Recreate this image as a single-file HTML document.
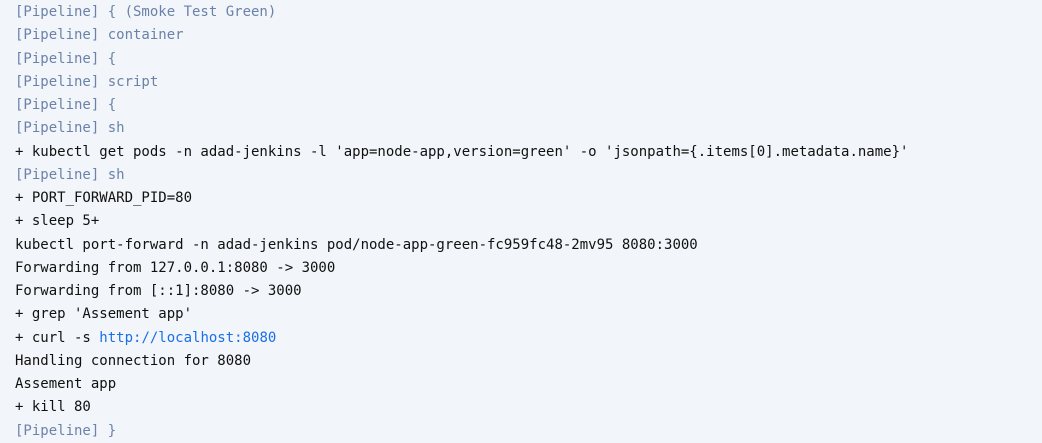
<!DOCTYPE html>
<html><head><style>
html,body{margin:0;padding:0;background:#f2f5f9;width:1042px;height:425px;overflow:hidden}
pre{margin:0;position:absolute;left:15px;top:1px;font-family:"DejaVu Sans Mono","Liberation Mono",monospace;font-size:14px;line-height:23.25px;color:#111}
.p{color:#6b82aa}
a{color:#1a6fe6;text-decoration:none}
</style></head><body>
<pre><span class="p">[Pipeline] { (Smoke Test Green)</span>
<span class="p">[Pipeline] container</span>
<span class="p">[Pipeline] {</span>
<span class="p">[Pipeline] script</span>
<span class="p">[Pipeline] {</span>
<span class="p">[Pipeline] sh</span>
+ kubectl get pods -n adad-jenkins -l 'app=node-app,version=green' -o 'jsonpath={.items[0].metadata.name}'
<span class="p">[Pipeline] sh</span>
+ PORT_FORWARD_PID=80
+ sleep 5+
kubectl port-forward -n adad-jenkins pod/node-app-green-fc959fc48-2mv95 8080:3000
Forwarding from 127.0.0.1:8080 -&gt; 3000
Forwarding from [::1]:8080 -&gt; 3000
+ grep 'Assement app'
+ curl -s <a>http://localhost:8080</a>
Handling connection for 8080
Assement app
+ kill 80
<span class="p">[Pipeline] }</span></pre>
</body></html>
